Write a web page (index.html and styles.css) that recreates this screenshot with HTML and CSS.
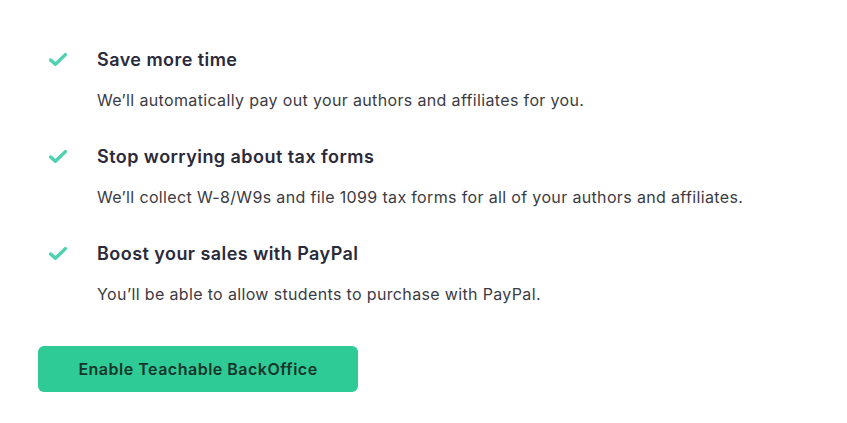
FILE: index.html
```html
<!DOCTYPE html>
<html>
<head>
<meta charset="utf-8">
<link rel="stylesheet" href="styles.css">
</head>
<body>
<div class="page">
  <ul class="features">
    <li class="feature">
      <svg class="check" viewBox="0 0 20 15" width="20" height="15"><path d="M2.6 8 L7.4 12.3 L17.4 2.6" fill="none" stroke="#4dd1ae" stroke-width="3.4" stroke-linecap="round" stroke-linejoin="round"/></svg>
      <div class="text">
        <h3 class="title">Save more time</h3>
        <p class="desc">We’ll automatically pay out your authors and affiliates for you.</p>
      </div>
    </li>
    <li class="feature">
      <svg class="check" viewBox="0 0 20 15" width="20" height="15"><path d="M2.6 8 L7.4 12.3 L17.4 2.6" fill="none" stroke="#4dd1ae" stroke-width="3.4" stroke-linecap="round" stroke-linejoin="round"/></svg>
      <div class="text">
        <h3 class="title">Stop worrying about tax forms</h3>
        <p class="desc">We’ll collect W-8/W9s and file 1099 tax forms for all of your authors and affiliates.</p>
      </div>
    </li>
    <li class="feature">
      <svg class="check" viewBox="0 0 20 15" width="20" height="15"><path d="M2.6 8 L7.4 12.3 L17.4 2.6" fill="none" stroke="#4dd1ae" stroke-width="3.4" stroke-linecap="round" stroke-linejoin="round"/></svg>
      <div class="text">
        <h3 class="title">Boost your sales with PayPal</h3>
        <p class="desc">You’ll be able to allow students to purchase with PayPal.</p>
      </div>
    </li>
  </ul>
  <button class="cta">Enable Teachable BackOffice</button>
</div>
</body>
</html>
```
FILE: styles.css
```css
html, body {
  margin: 0;
  padding: 0;
  background: #ffffff;
}
body {
  font-family: Inter, "Noto Sans", sans-serif;
  color: #2c2c38;
}
.page {
  padding: 48px 0 0 38px;
}
.features {
  list-style: none;
  margin: 0;
  padding: 0 0 0 10px;
  display: flex;
  flex-direction: column;
  gap: 33px;
}
.feature {
  display: flex;
  align-items: flex-start;
  gap: 29px;
}
.check {
  flex: none;
  margin-top: 4px;
}
.text {
  display: flex;
  flex-direction: column;
  gap: 16px;
}
.title {
  margin: 0;
  font-size: 18px;
  line-height: 24px;
  font-weight: 600;
  letter-spacing: 0.45px;
  color: #2a2a3a;
}
.desc {
  margin: 0;
  font-size: 16px;
  line-height: 24px;
  letter-spacing: 0.35px;
  color: #3b3b44;
}
.cta {
  display: block;
  margin-top: 40px;
  width: 320px;
  height: 46px;
  border: none;
  border-radius: 6px;
  background: #2ecb96;
  color: #16352b;
  font-family: Inter, "Noto Sans", sans-serif;
  font-size: 16px;
  font-weight: 600;
  letter-spacing: 0.5px;
  cursor: pointer;
}
```
